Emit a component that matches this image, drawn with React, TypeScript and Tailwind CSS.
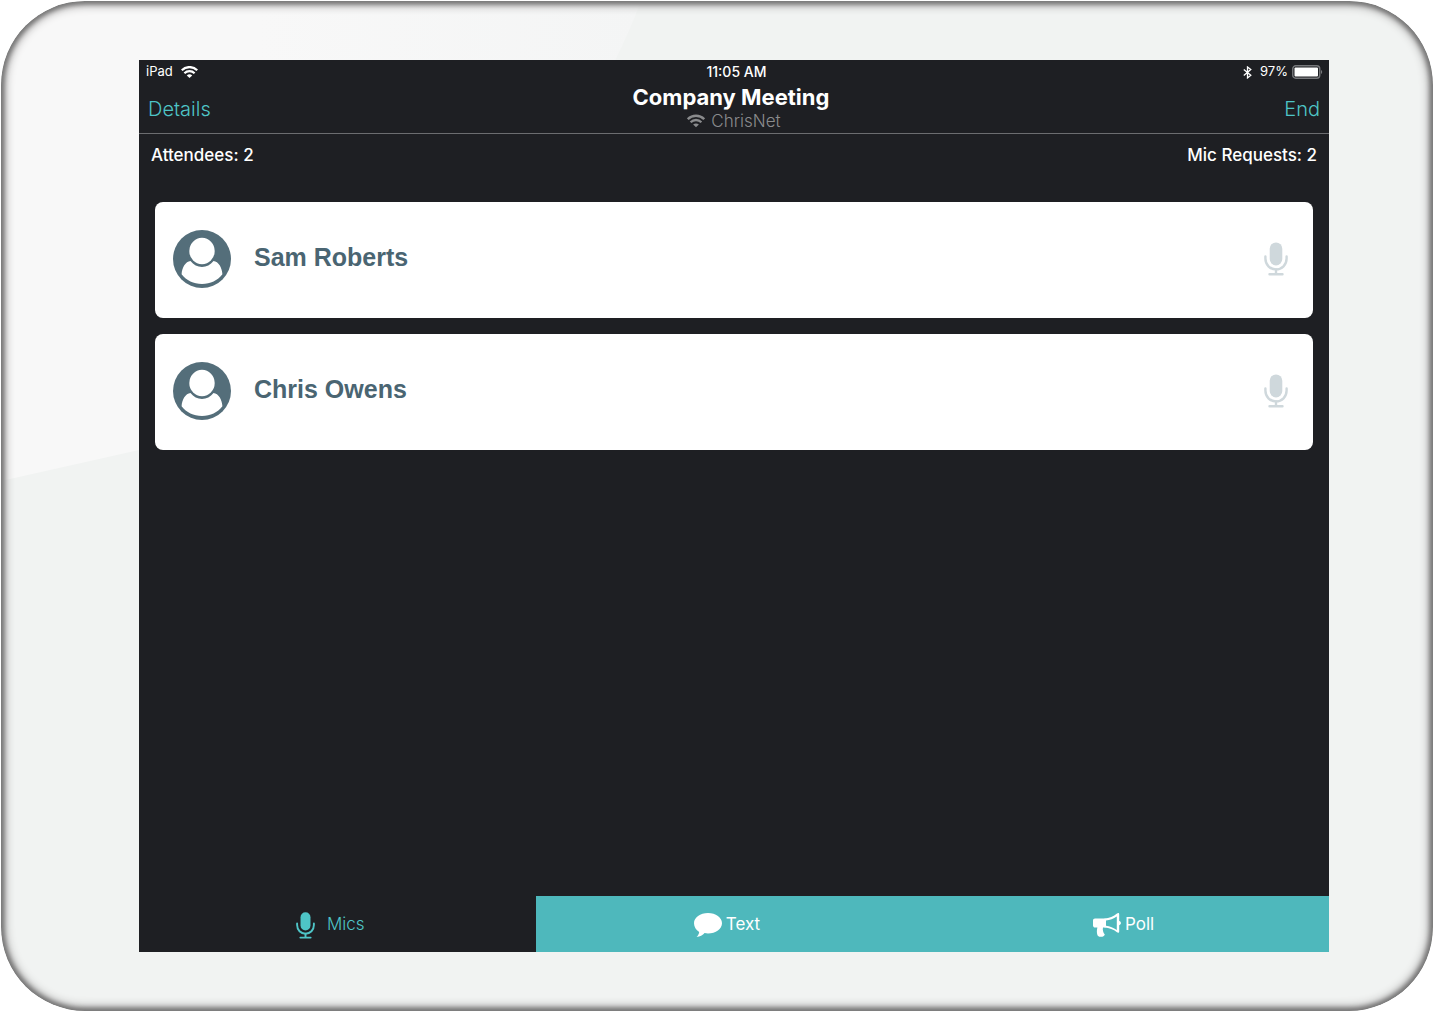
import clsx from "clsx";

type IconProps = { className?: string };

const attendees = [
  { id: "sam", name: "Sam Roberts" },
  { id: "chris", name: "Chris Owens" },
];

function WifiIcon({ className }: IconProps) {
  return (
    <svg viewBox="0 0 20 14" className={className} fill="none" stroke="currentColor" strokeWidth="2.6" aria-hidden="true">
      <path d="M.9 5C6-.1 14-.1 19.100 5" />
      <path d="M4 8.400c3.400-3.300 8.600-3.300 12 0" />
      <path d="M6.800 11c1.900-1.800 4.500-1.800 6.400 0L10 14z" fill="currentColor" stroke="none" />
    </svg>
  );
}

function BluetoothIcon({ className }: IconProps) {
  return (
    <svg viewBox="0 0 9 13" className={className} fill="none" stroke="currentColor" strokeWidth="1.3" aria-hidden="true">
      <path d="M.8 3.400l7 5.900-3.300 2.600V1l3.300 2.600-7 5.900" />
    </svg>
  );
}

function BatteryIcon({ className }: IconProps) {
  return (
    <svg viewBox="0 0 31 14" className={className} aria-hidden="true">
      <rect x=".75" y=".75" width="27" height="12.5" rx="3" fill="none" stroke="#77787b" strokeWidth="1.4" />
      <rect x="2.500" y="2.500" width="23.500" height="9" rx="1" fill="#fff" />
      <path d="M29 5v4c1.600-.5 1.600-3.500 0-4z" fill="#77787b" />
    </svg>
  );
}

function MicIcon({ className }: IconProps) {
  return (
    <svg viewBox="0 0 24 34" className={className} fill="none" stroke="currentColor" strokeWidth="2.4" strokeLinecap="round" aria-hidden="true">
      <rect x="5.700" y="0.400" width="12.600" height="23" rx="6.300" fill="currentColor" stroke="none" />
      <path d="M1.400 14.500v2C1.400 22.800 6 27.400 12 27.400s10.600-4.600 10.600-10.900v-2" />
      <path d="M12 27.400v4.800M5.500 32.300h13" />
    </svg>
  );
}

function AvatarIcon({ className }: IconProps) {
  return (
    <svg viewBox="0 0 58 58" className={className} aria-hidden="true">
      <circle cx="29" cy="29" r="29" fill="#546e7a" />
      <ellipse cx="29" cy="21" rx="12.700" ry="13.200" fill="#fff" />
      <path d="M17.500 31c3 3.800 7 6 11.500 6s8.500-2.200 11.500-6c5 .6 8.500 6.500 8.900 13.300C44.500 50.600 37.500 54 29 54S13.500 50.600 8.600 44.300C9 37.500 12.500 31.600 17.500 31z" fill="#fff" />
    </svg>
  );
}

function BubbleIcon({ className }: IconProps) {
  return (
    <svg viewBox="0 0 28 24" className={className} fill="currentColor" aria-hidden="true">
      <path d="M14 0c7.800 0 14 4.500 14 10.200s-6.200 10.200-14 10.200c-1.200 0-2.300-.1-3.400-.3C8.700 22.300 6 23.800 2.600 24c1.400-1.300 2.300-3 2.600-5.100C2 17 0 13.800 0 10.200 0 4.500 6.200 0 14 0z" />
    </svg>
  );
}

function MegaphoneIcon({ className }: IconProps) {
  return (
    <svg viewBox="0 0 28 24" className={className} fill="currentColor" aria-hidden="true">
      <path d="M2 5.500h10.500v9H10c-.6 2.300.1 5 1.800 7-.5 1.700-2.300 2.500-4.300 2.300-1.700-.1-2.700-.7-3.100-1.800-.7-2.400-.7-5 0-7.500H2.200C.9 14.500 0 13.600 0 12.400V7.600c0-1.200.8-2.100 2-2.100z" />
      <path fillRule="evenodd" d="M11.500 5.500C16.300 5.200 20.500 3.400 24 .6c1.200-.9 2.200-.6 2.200.8V8c2.300.6 2.300 3.600 0 4.200v6.200c0 1.300-1.200 1.700-2.200.8-3.600-2.700-7.700-4.500-12.500-4.700zM13 7.500v5.200c3.900.5 7.500 1.900 10.800 4.200V3.500C20.500 5.700 16.900 7 13 7.500z" />
    </svg>
  );
}

const tabs = [
  { label: "Mics", icon: <MicIcon className="h-[27px] w-[19px]" />, active: true },
  { label: "Text", icon: <BubbleIcon className="h-6 w-7" />, active: false },
  { label: "Poll", icon: <MegaphoneIcon className="h-6 w-7" />, active: false },
];

function StatusBar() {
  return (
    <div className="grid h-6 grid-cols-[1fr_auto_1fr] items-center pr-1.5 pl-[7px] text-[13px] text-white">
      <div className="flex items-center gap-2">
        <span>iPad</span>
        <WifiIcon className="h-3 w-[17px]" />
      </div>
      <span className="pl-1 text-sm font-medium">11:05 AM</span>
      <div className="flex items-center justify-end">
        <BluetoothIcon className="mr-2 h-[13px] w-[9px]" />
        <span className="mr-1">97%</span>
        <BatteryIcon className="h-3.5 w-[31px]" />
      </div>
    </div>
  );
}

function Header() {
  return (
    <header className="grid h-[50px] grid-cols-[1fr_auto_1fr] items-center border-b border-[#6c6d70] px-[9px]">
      <button type="button" className="justify-self-start text-xl font-light text-[#4ec5c7]">
        Details
      </button>
      <div className="flex flex-col items-center">
        <h1 className="pr-1.5 text-[22px] leading-6 font-bold text-white">Company Meeting</h1>
        <div className="flex items-center gap-1.5 text-[17px] leading-6 font-light text-[#8a8b8d]">
          <WifiIcon className="h-3.5 w-[18px]" />
          ChrisNet
        </div>
      </div>
      <button type="button" className="justify-self-end text-xl font-light text-[#4ec5c7]">
        End
      </button>
    </header>
  );
}

function AttendeeCard({ name }: { name: string }) {
  return (
    <li className="flex h-[116px] items-center rounded-lg bg-white pr-[25px] pb-0.5 pl-[18px]">
      <AvatarIcon className="size-[58px]" />
      <span className="ml-[23px] flex-1 pb-1 font-['Liberation_Sans',sans-serif] text-[25px] leading-8 font-bold text-[#4a6572]">
        {name}
      </span>
      <button type="button" aria-label={`Open mic for ${name}`} className="text-[#cfd8dc]">
        <MicIcon className="h-[34px] w-6" />
      </button>
    </li>
  );
}

function TabBar() {
  return (
    <nav className="grid h-14 grid-cols-3">
      {tabs.map((tab) => (
        <button
          key={tab.label}
          type="button"
          aria-pressed={tab.active}
          className={clsx(
            "flex items-center justify-center pt-0.5 text-[17px]",
            tab.active ? "gap-3 pr-3.5 font-light text-[#4ec5c7]" : "gap-1 bg-[#4eb8bc] pr-3.5 text-white"
          )}
        >
          {tab.icon}
          {tab.label}
        </button>
      ))}
    </nav>
  );
}

// Soft highlight in the top-left part of the bezel
function Glare() {
  return (
    <svg viewBox="0 0 1432 1010" preserveAspectRatio="none" className="absolute inset-0 size-full" aria-hidden="true">
      <defs>
        <linearGradient id="glare" x1="0" x2="1" y1="0" y2="0">
          <stop offset="0.4" stopColor="#f8f8f8" />
          <stop offset="1" stopColor="#f4f5f5" />
        </linearGradient>
      </defs>
      <path d="M0 480L138 449C380 370 560 210 640 0H0z" fill="url(#glare)" />
    </svg>
  );
}

export default function App() {
  return (
    <div className="flex min-h-screen bg-white p-px font-[Inter,sans-serif]">
      <div className="relative flex flex-1 overflow-hidden rounded-[84px] bg-[#f1f3f2] pt-[59px] pr-[104px] pb-[59px] pl-[138px]">
        <Glare />
        <main className="relative flex flex-1 flex-col bg-[#1e1f23]">
          <StatusBar />
          <Header />
          <div className="flex justify-between px-3 pt-[9px] text-[17px] leading-6 font-medium text-white">
            <span>Attendees: 2</span>
            <span>Mic Requests: 2</span>
          </div>
          <ul className="flex flex-1 flex-col gap-4 px-4 pt-[35px]">
            {attendees.map((attendee) => (
              <AttendeeCard key={attendee.id} name={attendee.name} />
            ))}
          </ul>
          <TabBar />
        </main>
        <div className="pointer-events-none absolute inset-0 rounded-[84px] shadow-[inset_0_0_4px_3px_#777777,inset_0_0_10px_4px_#9a9898]" />
      </div>
    </div>
  );
}
